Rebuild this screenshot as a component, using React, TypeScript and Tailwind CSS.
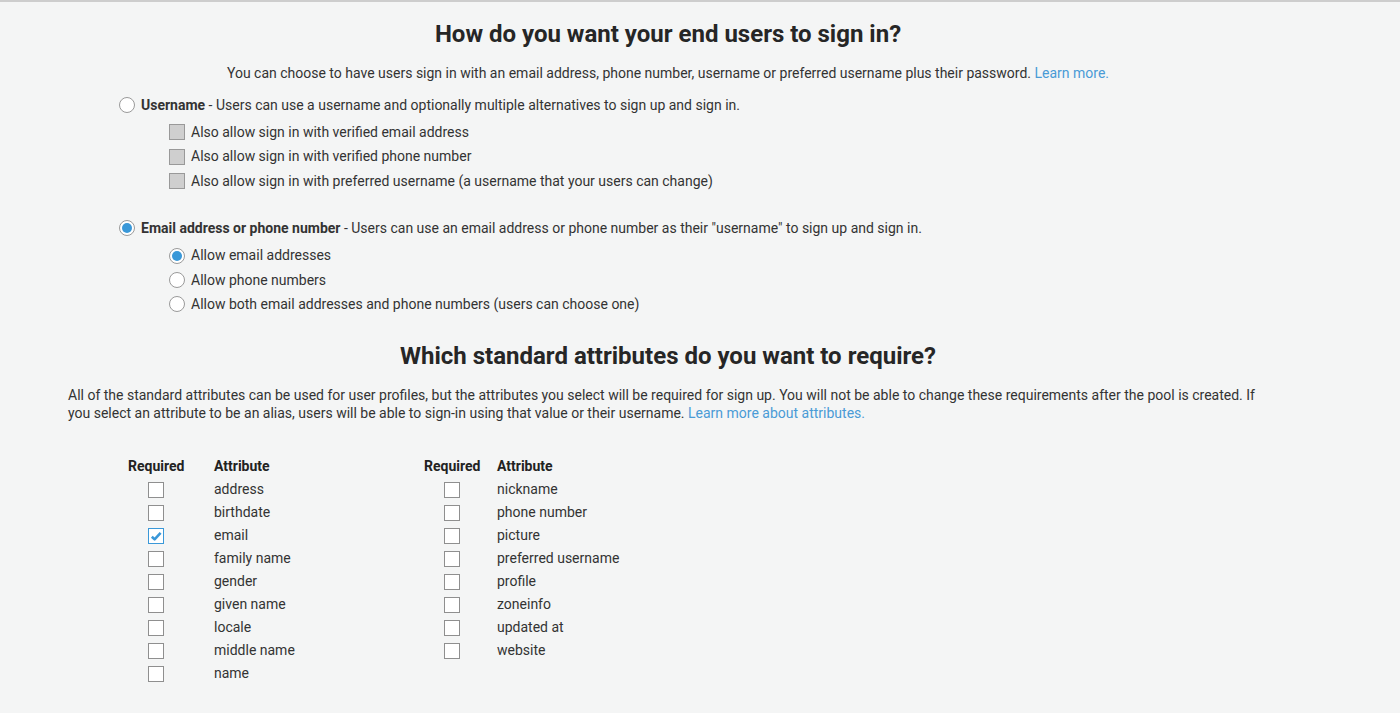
import React from "react";

const leftAttrs = ["address", "birthdate", "email", "family name", "gender", "given name", "locale", "middle name", "name"];
const rightAttrs = ["nickname", "phone number", "picture", "preferred username", "profile", "zoneinfo", "updated at", "website"];

const Radio = ({ checked }: { checked?: boolean }) => (
  <span className="w-4 h-4 rounded-full border border-[#9a9a9a] bg-white flex items-center justify-center shrink-0">
    {checked && <span className="w-[10px] h-[10px] rounded-full bg-[#3a98d8]" />}
  </span>
);

const DisabledBox = () => <span className="w-4 h-4 border border-[#999] bg-[#cfcfcf] shrink-0" />;

const CheckBox = ({ checked }: { checked?: boolean }) => (
  <span
    className={`w-4 h-4 border bg-white flex items-center justify-center shrink-0 ${
      checked ? "border-[#3a98d8]" : "border-[#8f8f8f]"
    }`}
  >
    {checked && (
      <svg width="12" height="12" viewBox="0 0 12 12">
        <path d="M1.8 6.8 L4.6 9.3 L10.6 2.8" fill="none" stroke="#3a98d8" strokeWidth="2.6" strokeLinejoin="round" />
      </svg>
    )}
  </span>
);

const AttrTable = ({ attrs, reqWidth, checkedAttr }: { attrs: string[]; reqWidth: string; checkedAttr?: string }) => (
  <div className="flex flex-col">
    <div className="flex h-[23px] items-center font-bold text-[#222]">
      <span className={reqWidth}>Required</span>
      <span>Attribute</span>
    </div>
    {attrs.map((a) => (
      <div key={a} className="flex h-[23px] items-center">
        <span className={`${reqWidth} pl-[20px]`}>
          <CheckBox checked={a === checkedAttr} />
        </span>
        <span>{a}</span>
      </div>
    ))}
  </div>
);

export default function App() {
  return (
    <div className="min-h-screen bg-[#f4f5f5] border-t-2 border-[#cdcdcd] text-[14px] text-[#333] font-['Roboto',sans-serif]">
      <div className="ml-[68px] w-[1200px] pb-10">
        <h1 className="text-center text-[24px] leading-[28px] font-bold text-[#262626] mt-[18px]">
          How do you want your end users to sign in?
        </h1>
        <p className="text-center leading-[20px] mt-[15px]">
          You can choose to have users sign in with an email address, phone number, username or preferred username plus their password.{" "}
          <a className="text-[#4a9bd6]">Learn more.</a>
        </p>

        <div className="ml-[51px] mt-[10px]">
          <div className="flex items-center gap-[6px] h-[24px]">
            <Radio />
            <span>
              <b>Username</b> - Users can use a username and optionally multiple alternatives to sign up and sign in.
            </span>
          </div>
          <div className="ml-[50px] mt-[3px] flex flex-col">
            <div className="flex items-center gap-[6px] h-[24px]">
              <DisabledBox />
              <span>Also allow sign in with verified email address</span>
            </div>
            <div className="flex items-center gap-[6px] h-[25px]">
              <DisabledBox />
              <span>Also allow sign in with verified phone number</span>
            </div>
            <div className="flex items-center gap-[6px] h-[24px]">
              <DisabledBox />
              <span>Also allow sign in with preferred username (a username that your users can change)</span>
            </div>
          </div>

          <div className="flex items-center gap-[6px] h-[24px] mt-[23px]">
            <Radio checked />
            <span>
              <b>Email address or phone number</b> - Users can use an email address or phone number as their "username" to sign up and sign in.
            </span>
          </div>
          <div className="ml-[50px] mt-[3px] flex flex-col">
            <div className="flex items-center gap-[6px] h-[25px]">
              <Radio checked />
              <span>Allow email addresses</span>
            </div>
            <div className="flex items-center gap-[6px] h-[24px]">
              <Radio />
              <span>Allow phone numbers</span>
            </div>
            <div className="flex items-center gap-[6px] h-[24px]">
              <Radio />
              <span>Allow both email addresses and phone numbers (users can choose one)</span>
            </div>
          </div>
        </div>

        <h2 className="text-center text-[24px] leading-[28px] font-bold text-[#262626] mt-[26px]">
          Which standard attributes do you want to require?
        </h2>
        <p className="leading-[18px] mt-[16px]">
          All of the standard attributes can be used for user profiles, but the attributes you select will be required for sign up. You will not be able to change these requirements after the pool is created. If you select an attribute to be an alias, users will be able to sign-in using that value or their username.{" "}
          <a className="text-[#4a9bd6]">Learn more about attributes.</a>
        </p>

        <div className="flex ml-[60px] mt-[33px]">
          <div className="w-[296px]">
            <AttrTable attrs={leftAttrs} reqWidth="w-[86px]" checkedAttr="email" />
          </div>
          <AttrTable attrs={rightAttrs} reqWidth="w-[73px]" />
        </div>
      </div>
    </div>
  );
}
